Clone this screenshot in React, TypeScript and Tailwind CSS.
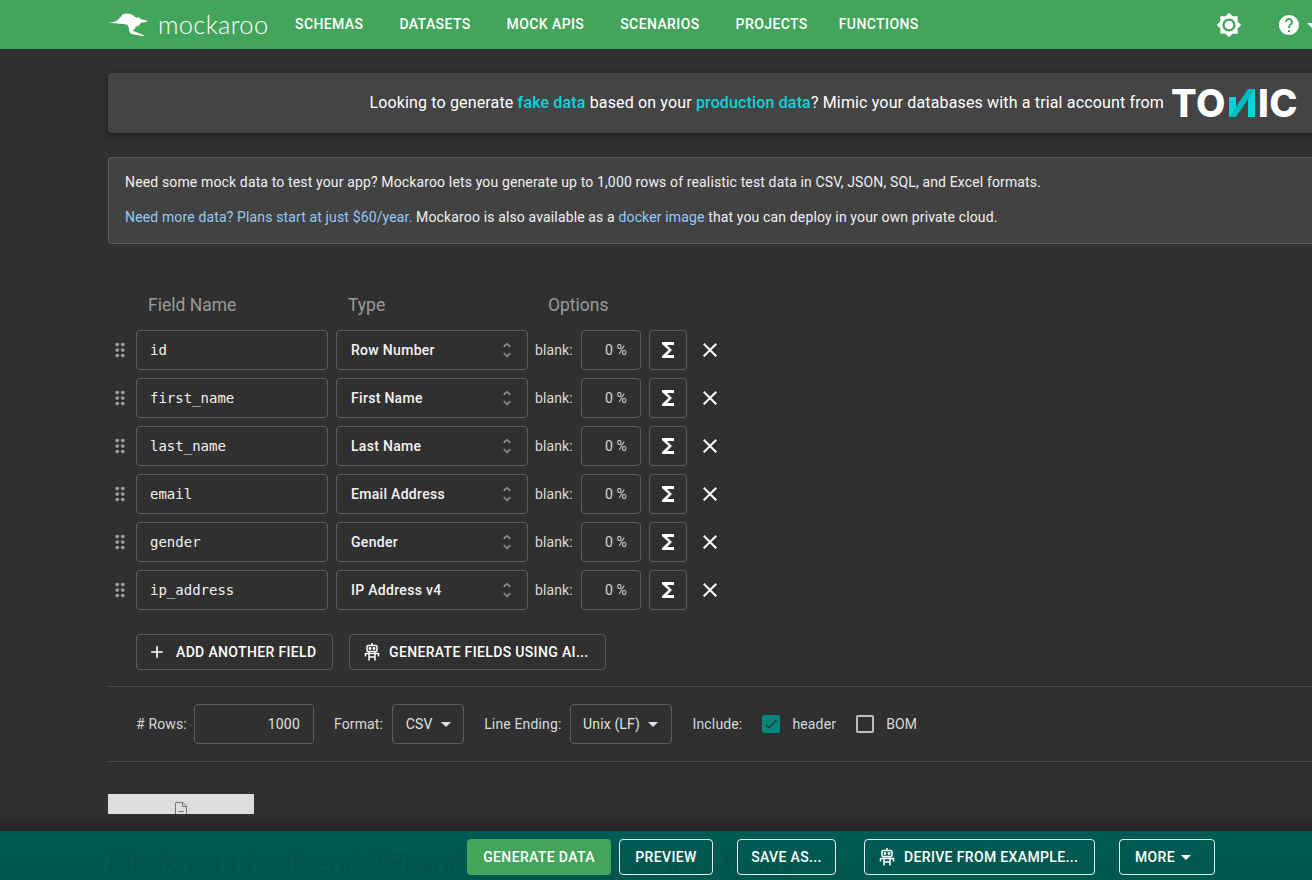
import { MdAdd, MdArrowDropDown, MdBrightness7, MdCheck, MdClose, MdDragIndicator, MdFunctions, MdHelp, MdUnfoldMore } from 'react-icons/md'

const nav = ['SCHEMAS', 'DATASETS', 'MOCK APIS', 'SCENARIOS', 'PROJECTS', 'FUNCTIONS']

const fields = [
  { name: 'id', type: 'Row Number' },
  { name: 'first_name', type: 'First Name' },
  { name: 'last_name', type: 'Last Name' },
  { name: 'email', type: 'Email Address' },
  { name: 'gender', type: 'Gender' },
  { name: 'ip_address', type: 'IP Address v4' },
]

const Robot = () => (
  <svg width="16" height="18" viewBox="0 0 16 18" fill="none" stroke="currentColor" strokeWidth="1.5">
    <path d="M8 0V2.5" />
    <rect x="3" y="2.5" width="10" height="6" rx="1.2" />
    <circle cx="6" cy="5.5" r="0.7" fill="currentColor" />
    <circle cx="10" cy="5.5" r="0.7" fill="currentColor" />
    <path d="M1.5 13.5V10.5H14.5V13.5M5 8.5V17.5M11 8.5V17.5M5 14H11" />
  </svg>
)

const Kangaroo = () => (
  <svg width="40" height="25" viewBox="12 12 120 75" fill="white">
    <path d="M12 42 C30 46 42 38 52 24 C60 14 80 14 92 26 L100 30 L104 26 L108 32 L130 38 L128 42 L110 44 C108 52 100 56 95 55 C96 60 90 66 86 68 L120 82 L118 85 L82 78 C72 70 78 60 70 50 C52 46 36 50 12 42 Z" />
  </svg>
)

const TonicMark = () => (
  <svg width="26" height="28" viewBox="0 0 26 28" className="mx-[3px]">
    <path d="M0 8H7V28H0ZM19 0H26V28H19Z" fill="#00d6da" />
    <path d="M0 28L19 0H26L7 28Z" fill="#00bcc0" />
  </svg>
)

const Select = ({ label }: { label: string }) => (
  <div className="flex h-10 w-[192px] items-center justify-between rounded border border-[#5c5c5c] pl-[14px] pr-[10px] text-[14px] font-medium tracking-[0.3px] text-[#f4f4f4]">
    {label}
    <MdUnfoldMore size={20} className="text-[#8f8f8f]" />
  </div>
)

const FieldRow = ({ name, type }: { name: string; type: string }) => (
  <div className="flex h-10 items-center">
    <MdDragIndicator size={22} className="ml-px mr-[5px] text-[#a0a0a0]" />
    <div className="mr-2 flex h-10 w-[192px] items-center rounded border border-[#5c5c5c] px-[13px] font-['DejaVu_Sans_Mono',monospace] text-[14px] text-[#f0f0f0]">
      {name}
    </div>
    <Select label={type} />
    <span className="ml-[7px] mr-[8px] text-[14px] tracking-[0.1px] text-[#d8d8d8]">blank:</span>
    <div className="flex h-10 w-[60px] items-center justify-end rounded border border-[#5c5c5c] pr-[13px] text-[14px] text-[#d8d8d8]">
      0&nbsp;%
    </div>
    <div className="ml-2 flex h-10 w-[38px] items-center justify-center rounded border border-[#5c5c5c] text-white">
      <MdFunctions size={24} />
    </div>
    <MdClose size={24} className="ml-[11px] text-white" />
  </div>
)

const OutlineButton = ({ className, children }: { className: string; children: React.ReactNode }) => (
  <div className={`flex h-9 items-center gap-2 rounded text-[14px] font-medium tracking-[0.35px] text-white ${className}`}>
    {children}
  </div>
)

const Dropdown = ({ label, width }: { label: string; width: string }) => (
  <div className={`flex h-10 items-center justify-center gap-[8px] rounded border border-[#5c5c5c] text-[14px] text-[#e0e0e0] ${width}`}>
    {label}
    <span className="h-0 w-0 border-x-[5px] border-t-[5px] border-x-transparent border-t-[#e0e0e0]" />
  </div>
)

export default function App() {
  return (
    <div className="relative flex h-[880px] w-[1312px] flex-col overflow-hidden bg-[#303030] font-['Roboto',sans-serif]">
      {/* Header */}
      <header className="flex h-[49px] shrink-0 items-center bg-[#43a55b] pl-[108px]">
        <Kangaroo />
        <span className="ml-[10px] w-[110px] font-['Lato',sans-serif] text-[25.5px] font-light leading-none tracking-[0.3px] text-white">mockaroo</span>
        <nav className="ml-[27px] flex gap-9 text-[14px] font-medium tracking-[0.4px] text-white">
          {nav.map((item) => (
            <span key={item} className="last:-ml-[5px]">
              {item}
            </span>
          ))}
        </nav>
        <div className="ml-auto flex items-center text-white">
          <MdBrightness7 size={26} />
          <MdHelp size={24} className="ml-[35px]" />
          <MdArrowDropDown size={24} className="-mr-[12px] -ml-[1px]" />
        </div>
      </header>

      <main className="flex flex-1 flex-col pl-[108px]">
        {/* Tonic banner */}
        <div className="mt-6 flex h-[60px] items-center justify-end rounded-l bg-[#444444] pr-[14px] text-[16px] tracking-[0.15px] text-white shadow-[0_2px_6px_rgba(0,0,0,0.5)]">
          Looking to generate&nbsp;<b className="font-medium text-[#00d6da]">fake data</b>&nbsp;based on your&nbsp;
          <b className="font-medium text-[#00d6da]">production data</b>? Mimic your databases with a trial account from
          <span className="ml-[7px] flex items-center font-['Inter',sans-serif] text-[38px] font-extrabold leading-none tracking-[0.5px]">
            TO
            <TonicMark />
            IC
          </span>
        </div>

        {/* Intro */}
        <div className="mt-6 h-[87px] rounded-l border border-r-0 border-[#5c5c5c] bg-[#424242] pl-4 pt-4 text-[14px] leading-[17px] tracking-[0.14px] text-[#f0f0f0]">
          <p>Need some mock data to test your app? Mockaroo lets you generate up to 1,000 rows of realistic test data in CSV, JSON, SQL, and Excel formats.</p>
          <p className="mt-[18px]">
            <span className="text-[#90caf9]">Need more data? Plans start at just $60/year.</span> Mockaroo is also available as a{' '}
            <span className="text-[#90caf9]">docker image</span> that you can deploy in your own private cloud.
          </p>
        </div>

        {/* Field table */}
        <div className="mt-[50px] flex h-[22px] items-center pl-10 text-[17.5px] text-[#9a9a9a]">
          <span className="w-[200px]">Field Name</span>
          <span className="w-[200px]">Type</span>
          <span>Options</span>
        </div>
        <div className="mt-[14px] flex flex-col gap-2">
          {fields.map((field) => (
            <FieldRow key={field.name} name={field.name} type={field.type} />
          ))}
        </div>

        <div className="mt-6 flex gap-4 pl-7">
          <OutlineButton className="w-[197px] border border-[#5c5c5c] pl-[10px]">
            <MdAdd size={20} className="mr-px" />
            ADD ANOTHER FIELD
          </OutlineButton>
          <OutlineButton className="w-[257px] border border-[#5c5c5c] pl-[14px]">
            <Robot />
            <span className="ml-px">GENERATE FIELDS USING AI...</span>
          </OutlineButton>
        </div>

        {/* Download options */}
        <div className="mt-4 flex h-[76px] items-center border-y border-[#484848] pl-7 text-[14px] tracking-[0.15px] text-[#d8d8d8]">
          <span className="mr-[7px]">#&nbsp;Rows:</span>
          <div className="flex h-10 w-[120px] items-center justify-end rounded border border-[#5c5c5c] pr-[13px] text-[#e0e0e0]">1000</div>
          <span className="ml-5 mr-[9px]">Format:</span>
          <Dropdown label="CSV" width="w-[72px]" />
          <span className="ml-5 mr-2">Line Ending:</span>
          <Dropdown label="Unix (LF)" width="w-[102px]" />
          <span className="ml-[21px]">Include:</span>
          <span className="ml-5 flex h-[18px] w-[18px] items-center justify-center rounded-[2px] bg-[#00897b] text-[#303030]">
            <MdCheck size={16} />
          </span>
          <span className="ml-3">header</span>
          <span className="ml-5 h-[18px] w-[18px] rounded-[2px] border-2 border-[#bdbdbd]" />
          <span className="ml-3">BOM</span>
        </div>

        {/* Image placeholder, cut off by the footer shadow */}
        <div className="mt-8 flex h-5 w-[146px] items-start justify-center overflow-hidden bg-[#dddddd] pt-2">
          <svg width="12" height="15" viewBox="0 0 12 15" fill="none" stroke="#777" strokeWidth="1" className="shrink-0">
            <path d="M0.5 0.5H8L11.5 4V14.5H0.5Z" />
            <path d="M7.5 0.5V4.5H11.5M3.5 9.5H8.5" />
          </svg>
        </div>
      </main>

      {/* Fixed action bar */}
      <div className="absolute inset-x-0 bottom-[49px] h-[17px] bg-gradient-to-b from-transparent to-black/25" />
      <footer className="absolute inset-x-0 bottom-0 flex h-[49px] items-start gap-2 bg-gradient-to-b from-[#005c54] to-[#00574e] pl-[467px] pt-2">
        <span className="absolute left-[108px] top-[13px] whitespace-nowrap text-[28.6px] font-light leading-[38px] text-[#00534c]">
          Mock your back-end API and start coding your UI today
        </span>
        <OutlineButton className="relative w-[144px] justify-center bg-[#43a55b] text-[#f4f4f4]">GENERATE DATA</OutlineButton>
        <OutlineButton className="relative w-[94px] justify-center border border-white/90">PREVIEW</OutlineButton>
        <OutlineButton className="relative ml-4 w-[99px] justify-center border border-white/90">SAVE AS...</OutlineButton>
        <OutlineButton className="relative ml-5 w-[231px] border border-white/90 pl-[14px]">
          <Robot />
          <span className="ml-px">DERIVE FROM EXAMPLE...</span>
        </OutlineButton>
        <OutlineButton className="relative ml-4 w-[96px] gap-[6px] border border-white/90 pl-[15px]">
          MORE
          <span className="h-0 w-0 border-x-[5px] border-t-[5px] border-x-transparent border-t-white" />
        </OutlineButton>
      </footer>
    </div>
  )
}
